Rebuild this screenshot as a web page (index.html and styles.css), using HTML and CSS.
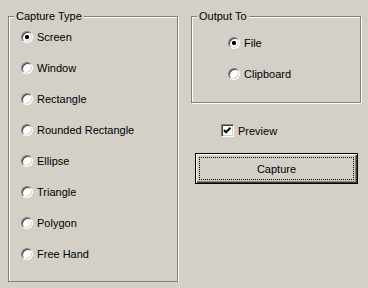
FILE: index.html
```html
<!DOCTYPE html>
<html lang="en">
<head>
  <meta charset="UTF-8">
  <title>Capture</title>
  <link rel="stylesheet" href="styles.css">
</head>
<body>

  <div class="dialog">
    <fieldset class="group group-type">
      <legend>Capture Type</legend>
      <div class="options">
        <label class="option"><input type="radio" name="type" checked>Screen</label>
        <label class="option"><input type="radio" name="type">Window</label>
        <label class="option"><input type="radio" name="type">Rectangle</label>
        <label class="option"><input type="radio" name="type">Rounded Rectangle</label>
        <label class="option"><input type="radio" name="type">Ellipse</label>
        <label class="option"><input type="radio" name="type">Triangle</label>
        <label class="option"><input type="radio" name="type">Polygon</label>
        <label class="option"><input type="radio" name="type">Free Hand</label>
      </div>
    </fieldset>

    <div class="side">
      <fieldset class="group group-output">
        <legend>Output To</legend>
        <div class="options">
          <label class="option"><input type="radio" name="output" checked>File</label>
          <label class="option"><input type="radio" name="output">Clipboard</label>
        </div>
      </fieldset>

      <label class="preview">
        <span class="check">
          <svg width="11" height="11" viewBox="0 0 11 11"><polyline points="2,5 4,7.2 8.5,2.7" fill="none" stroke="#000" stroke-width="2"/></svg>
        </span>
        Preview
      </label>

      <button class="capture">Capture</button>
    </div>
  </div>

</body>
</html>
```

FILE: styles.css
```css
body {
  margin: 0;
  background: #d4d0c8;
  color: #000;
  font: 11px "Liberation Sans", Arial, sans-serif;
}

.dialog {
  display: flex;
  gap: 13px;
  padding: 10px 0 0 8px;
}

.group {
  box-sizing: border-box;
  width: 170px;
  min-width: 0;
  margin: 0;
  padding: 0;
  border: 1px solid #808080;
  box-shadow: inset 1px 1px #fff, 1px 1px #fff;
}

legend {
  margin-left: 5px;
  padding: 0 2px;
  line-height: 13px;
  background: #d4d0c8;
}

.group-type .options {
  margin-top: -2px;
  padding: 0 0 12px 12px;
}

.group-output .options {
  padding: 4px 0 13px 36px;
}

.option {
  display: flex;
  align-items: center;
  gap: 4px;
  height: 31px;
}

input[type="radio"] {
  appearance: none;
  box-sizing: border-box;
  width: 12px;
  height: 12px;
  margin: 0;
  border: 1px solid;
  border-color: #808080 #fff #fff #808080;
  border-radius: 50%;
  background: #fff;
  box-shadow: inset 1px 1px #404040, inset -1px -1px #d4d0c8;
}

input[type="radio"]:checked {
  background: radial-gradient(circle, #000 0 1.8px, #fff 2.4px);
}

.side {
  display: flex;
  flex-direction: column;
  align-items: flex-start;
  width: 170px;
}

.preview {
  display: flex;
  align-items: center;
  gap: 4px;
  height: 13px;
  margin: 21px 0 0 30px;
}

.check {
  box-sizing: border-box;
  width: 13px;
  height: 13px;
  border: 1px solid;
  border-color: #808080 #fff #fff #808080;
  background: #fff;
  box-shadow: inset 1px 1px #404040, inset -1px -1px #d4d0c8;
}

.check svg {
  display: block;
}

.capture {
  position: relative;
  box-sizing: border-box;
  width: 163px;
  height: 31px;
  margin: 16px 0 0 4px;
  padding: 0;
  border: 1px solid #000;
  background: #d4d0c8;
  color: #000;
  font: inherit;
  box-shadow: inset 1px 1px #fff, inset -1px -1px #404040, inset -2px -2px #808080;
}

.capture::after {
  content: "";
  position: absolute;
  inset: 3px;
  border: 1px dotted #000;
}
```
